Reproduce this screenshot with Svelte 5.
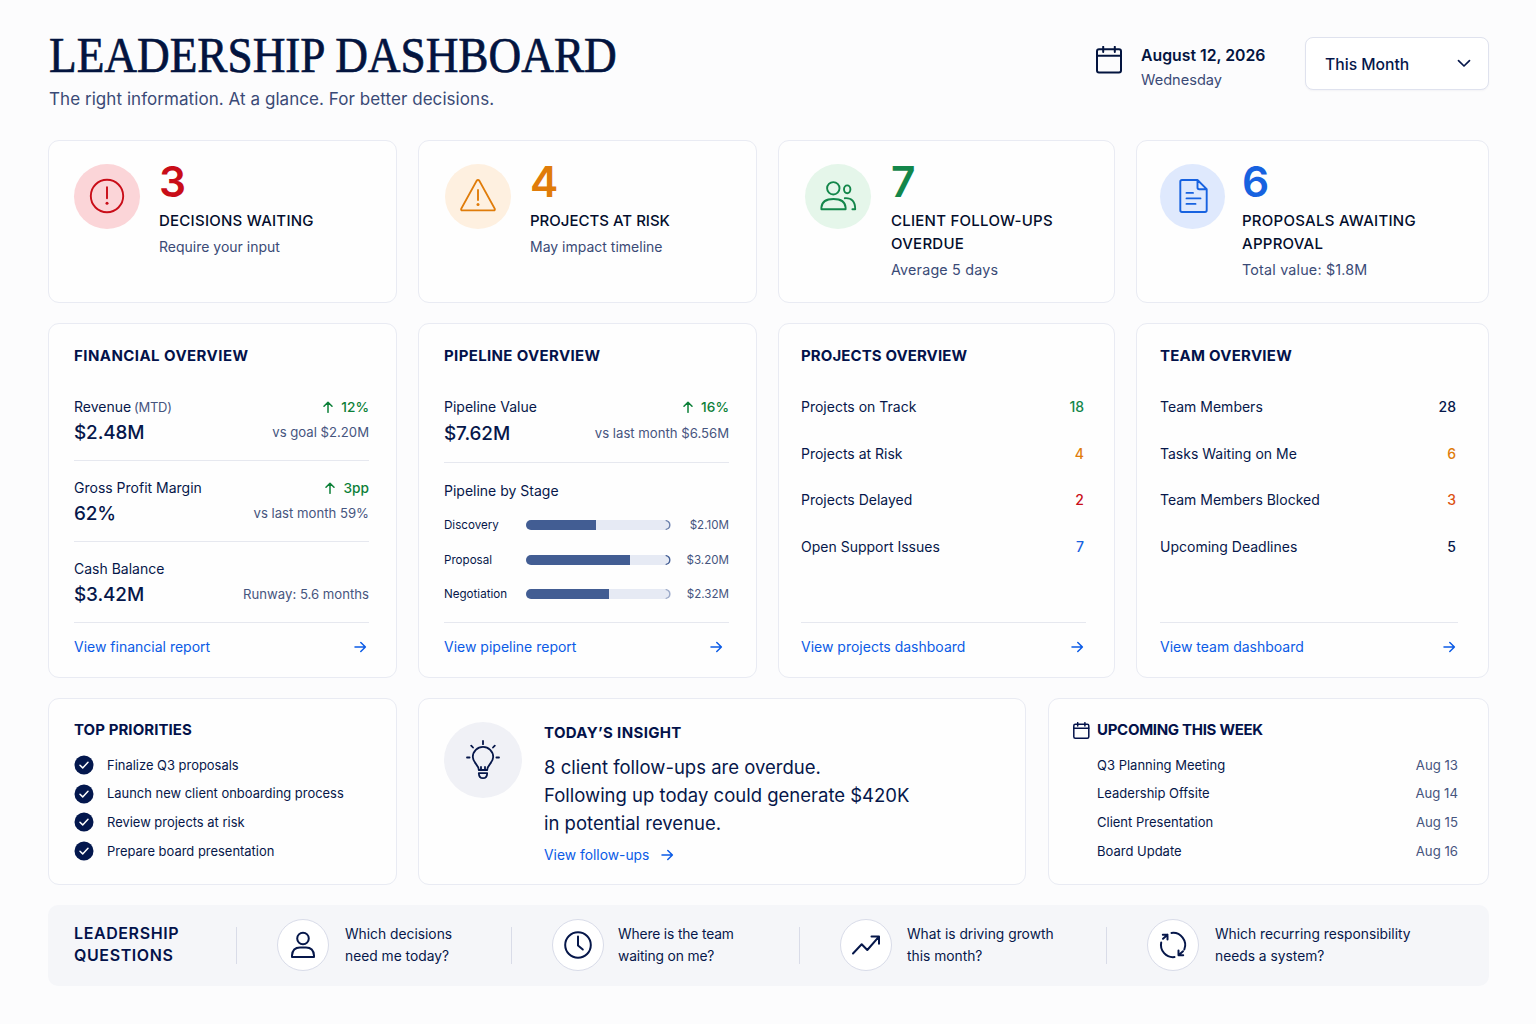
<script>
  const kpis = [
    { icon: 'alert', tone: 'red', value: '3', label: ['DECISIONS WAITING'], note: 'Require your input' },
    { icon: 'warning', tone: 'orange', value: '4', label: ['PROJECTS AT RISK'], note: 'May impact timeline' },
    { icon: 'people', tone: 'green', value: '7', label: ['CLIENT FOLLOW-UPS', 'OVERDUE'], note: 'Average 5 days' },
    { icon: 'document', tone: 'blue', value: '6', label: ['PROPOSALS AWAITING', 'APPROVAL'], note: 'Total value: $1.8M' }
  ];
  const stages = [
    { name: 'Discovery', share: 48.5, amount: '$2.10M', cap: 0.75 },
    { name: 'Proposal', share: 71.5, amount: '$3.20M', cap: 1 },
    { name: 'Negotiation', share: 57, amount: '$2.32M', cap: 0.45 }
  ];
  const projects = [
    { name: 'Projects on Track', value: '18', tone: 'green' },
    { name: 'Projects at Risk', value: '4', tone: 'orange' },
    { name: 'Projects Delayed', value: '2', tone: 'red' },
    { name: 'Open Support Issues', value: '7', tone: 'blue' }
  ];
  const team = [
    { name: 'Team Members', value: '28', tone: 'navy' },
    { name: 'Tasks Waiting on Me', value: '6', tone: 'orange' },
    { name: 'Team Members Blocked', value: '3', tone: 'rust' },
    { name: 'Upcoming Deadlines', value: '5', tone: 'navy' }
  ];
  const priorities = ['Finalize Q3 proposals', 'Launch new client onboarding process', 'Review projects at risk', 'Prepare board presentation'];
  const events = [
    ['Q3 Planning Meeting', 'Aug 13'],
    ['Leadership Offsite', 'Aug 14'],
    ['Client Presentation', 'Aug 15'],
    ['Board Update', 'Aug 16']
  ];
  const questions = [
    { icon: 'person', lines: ['Which decisions', 'need me today?'] },
    { icon: 'clock', lines: ['Where is the team', 'waiting on me?'] },
    { icon: 'trend', lines: ['What is driving growth', 'this month?'] },
    { icon: 'cycle', lines: ['Which recurring responsibility', 'needs a system?'] }
  ];
</script>

{#snippet arrow()}
  <svg class="arrow" width="13" height="12" viewBox="0 0 13 12"><path d="M1 6h10.400M6.800 1.500 11.400 6 6.800 10.500" /></svg>
{/snippet}

{#snippet rise(text)}
  <span class="rise">
    <svg width="10" height="12" viewBox="0 0 10 12"><path d="M5 11.3V1.2M1 5.2 5 1.2l4 4" /></svg>{text}
  </span>
{/snippet}

{#snippet metric(name, value, change, note, suffix = '')}
  <div class="metric">
    <div class="line"><span>{name}{#if suffix}&nbsp;<small>{suffix}</small>{/if}</span>{#if change}{@render rise(change)}{/if}</div>
    <div class="line big"><strong>{value}</strong><span class="vs">{note}</span></div>
  </div>
{/snippet}

{#snippet link(text)}
  <div class="link"><span>{text}</span>{@render arrow()}</div>
{/snippet}

{#snippet list(rows)}
  <div class="rows">
    {#each rows as r}
      <div class="row"><span>{r.name}</span><b class={r.tone}>{r.value}</b></div>
    {/each}
  </div>
{/snippet}

<div class="page">
  <header>
    <div class="heading">
      <h1>LEADERSHIP DASHBOARD</h1>
      <p>The right information. At a glance. For better decisions.</p>
    </div>
    <div class="tools">
      <svg class="cal" width="26" height="28" viewBox="0 0 26 28"><rect x="1" y="3.2" width="24" height="23.3" rx="2" /><path d="M1 9.8h24M7.2 .8v5.200M18.800 .8v5.200" /></svg>
      <div class="date"><strong>August 12, 2026</strong><span>Wednesday</span></div>
      <div class="select">
        <span>This Month</span>
        <svg width="14" height="9" viewBox="0 0 14 9"><path d="M1.500 1.700 7 7l5.500-5.300" /></svg>
      </div>
    </div>
  </header>

  <section class="grid kpis">
    {#each kpis as k}
      <article class="card kpi {k.tone}">
        <div class="disc">
          <svg width="38" height="38" viewBox="0 0 38 38">
            {#if k.icon === 'alert'}
              <circle cx="19" cy="19" r="16.200" /><path d="M19 10.200v11" /><circle class="dot" cx="19" cy="26.300" r="1.500" />
            {:else if k.icon === 'warning'}
              <path d="M17.600 3.900Q19 1.800 20.400 3.900L35.700 31.600Q36.300 33.400 34.600 33.400H3.400Q1.700 33.400 2.300 31.600Z" /><path d="M19 13v10" /><circle class="dot" cx="19" cy="27.500" r="1.500" />
            {:else if k.icon === 'people'}
              <circle cx="14.300" cy="11.300" r="6.200" />
              <path d="M2.400 32.200V30.500Q3 22 14.500 22T26.600 30.500V32.200Z" />
              <ellipse cx="28.200" cy="12.300" rx="3.200" ry="3.900" />
              <path d="M25.800 21.200Q36.200 20.500 36.200 32.200H33.400" />
            {:else}
              <path d="M23.500 3H8Q6.300 3 6.300 4.700V33.300Q6.300 35 8 35H31Q32.700 35 32.700 33.300V12.200L23.500 3V10.500Q23.500 12.200 25.200 12.200H32.700M12.500 15.900h6.500M12.500 21.400h14M12.500 26.900h9" />
            {/if}
          </svg>
        </div>
        <div class="kpi-text">
          <div class="number">{k.value}</div>
          <h3>{#each k.label as l}<span>{l}</span>{/each}</h3>
          <p>{k.note}</p>
        </div>
      </article>
    {/each}
  </section>

  <section class="grid overview">
    <article class="card financial">
      <h2>FINANCIAL OVERVIEW</h2>
      {@render metric('Revenue', '$2.48M', '12%', 'vs goal $2.20M', '(MTD)')}
      {@render metric('Gross Profit Margin', '62%', '3pp', 'vs last month 59%')}
      {@render metric('Cash Balance', '$3.42M', '', 'Runway: 5.6 months')}
      {@render link('View financial report')}
    </article>

    <article class="card pipeline">
      <h2>PIPELINE OVERVIEW</h2>
      {@render metric('Pipeline Value', '$7.62M', '16%', 'vs last month $6.56M')}
      <div class="stages">
        <h4>Pipeline by Stage</h4>
        {#each stages as s}
          <div class="stage">
            <span>{s.name}</span>
            <div class="track">
              <div class="fill" style="width:{s.share}%"></div>
              <svg width="6" height="10" viewBox="0 0 6 10" style="opacity:{s.cap}"><path d="M1.200 .6Q4.800 1.600 4.800 5T1.200 9.400" /></svg>
            </div>
            <em>{s.amount}</em>
          </div>
        {/each}
      </div>
      {@render link('View pipeline report')}
    </article>

    <article class="card projects">
      <h2>PROJECTS OVERVIEW</h2>
      {@render list(projects)}
      {@render link('View projects dashboard')}
    </article>

    <article class="card team">
      <h2>TEAM OVERVIEW</h2>
      {@render list(team)}
      {@render link('View team dashboard')}
    </article>
  </section>

  <section class="bottom">
    <article class="card priorities">
      <h2>TOP PRIORITIES</h2>
      {#each priorities as p}
        <div class="item">
          <svg width="20" height="20" viewBox="0 0 20 20"><circle cx="10" cy="10" r="9.500" /><path d="m6 10.300 2.700 2.600 5.300-5.600" /></svg>
          <span>{p}</span>
        </div>
      {/each}
    </article>

    <article class="card insight">
      <div class="bulb">
        <svg width="34" height="40" viewBox="0 0 34 40">
          <path d="M12.800 30C12.800 24.800 6.800 22.800 6.800 17a10.200 10.200 0 0 1 20.400 0C27.200 22.800 21.200 24.800 21.200 30ZM15 27v2.500M19 27v2.500M12.800 33.200H21.200Q21 38.200 17 38.200T12.800 33.200ZM17 1v3.200M5.200 5.600 7 7.500M28.800 5.600 27 7.500M1 17.500H3.600M30.400 17.500H33" />
        </svg>
      </div>
      <div class="insight-text">
        <h2>TODAY’S INSIGHT</h2>
        <p>8 client follow-ups are overdue.<br />Following up today could generate $420K<br />in potential revenue.</p>
        <div class="follow"><span>View follow-ups</span>{@render arrow()}</div>
      </div>
    </article>

    <article class="card upcoming">
      <h2>
        <svg width="17" height="17" viewBox="0 0 17 17"><rect x=".8" y="2.200" width="15" height="14" rx="1.500" /><path d="M.8 6.300h15M4.700 .7v3.300M11.900 .7v3.300" /></svg>
        <span>UPCOMING THIS WEEK</span>
      </h2>
      {#each events as [name, day]}
        <div class="event"><span>{name}</span><em>{day}</em></div>
      {/each}
    </article>
  </section>

  <footer>
    <h2>LEADERSHIP<br />QUESTIONS</h2>
    {#each questions as q}
      <div class="question {q.icon}">
        <i></i>
        <div class="ring">
          <svg width="30" height="30" viewBox="0 0 30 30">
            {#if q.icon === 'person'}
              <circle cx="15" cy="8.500" r="5.800" /><path d="M4 27V25.500Q4.500 17.500 12 17.500H18Q25.500 17.500 26 25.500V27Z" />
            {:else if q.icon === 'clock'}
              <circle cx="15" cy="15" r="12.800" /><path d="M15 6.500V15.500L19.800 19.500" />
            {:else if q.icon === 'trend'}
              <path d="M2 23.500 10.700 14.300 16.300 20 27.500 7.200M20.500 6.500H28V13.800" />
            {:else}
              <path d="M13.500 2.900A12.200 12.200 0 0 1 26.300 19.500M16.500 27.100A12.200 12.200 0 0 1 3.200 12.500" />
              <path d="M4.800 4.800H9.500V9.500M9.500 4.800 5 8.800M25.200 25.200H20.500V20.500M20.500 25.200 25 21.200" />
            {/if}
          </svg>
        </div>
        <p>{q.lines[0]}<br />{q.lines[1]}</p>
      </div>
    {/each}
  </footer>
</div>

<style>
  :global(body) { background: #fcfcfd; }
  .page {
    box-sizing: border-box; width: 1536px; height: 1024px; padding: 37px 47px 0 48px;
    font-family: Inter, "Liberation Sans", sans-serif; color: #06174a; font-size: 14px;
  }
  h1, h2, h3, h4, p { margin: 0; font-weight: 400; }
  em { font-style: normal; }
  svg { display: block; flex: none; fill: none; stroke: currentColor; stroke-width: 2; stroke-linecap: round; stroke-linejoin: round; }

  header { display: flex; justify-content: space-between; height: 103px; }
  h1 {
    font: 400 50px/50px "Liberation Serif", serif; color: #03143f; white-space: nowrap; width: 560px;
    -webkit-text-stroke: 0.7px #03143f; transform: scaleX(0.905); transform-origin: 0 0; margin: -7px 0 0 1px;
  }
  .heading p { margin: 7px 0 0 1px; font-size: 17px; letter-spacing: .06px; line-height: 24px; color: #3a4a76; white-space: nowrap; }
  .tools { display: flex; align-items: flex-start; }
  .cal { margin: 9px 19px 0 0; color: #03143f; }
  .date { width: 164px; display: flex; flex-direction: column; line-height: 24px; padding-top: 7px; }
  .date strong { font-size: 15.800px; font-weight: 600; color: #03143f; line-height: 24px; }
  .date span { font-size: 14.600px; }
  .date span { color: #3a4a76; }
  .select {
    box-sizing: border-box; width: 184px; height: 53px; border: 1px solid #dfe2ee; border-radius: 8px; background: #fff;
    display: flex; align-items: center; justify-content: space-between; padding: 0 17px 0 19px; font-size: 15.700px; font-weight: 450;
    box-shadow: 0 1px 2px rgba(20, 30, 80, .04);
  }
  .select span { margin-top: 1px; }
  .select svg { stroke-width: 1.700; }

  .grid { display: grid; grid-template-columns: 349px 339px 337px 353px; column-gap: 21px; }
  .card { box-sizing: border-box; background: #fefefe; border: 1px solid #e9ebf3; border-radius: 11px; }
  .kpis { height: 163px; margin-bottom: 20px; }
  .kpi { display: flex; padding: 19px 0 0 25px; }
  .kpi.orange, .kpi.green { padding-left: 26px; }
  .kpi.blue { padding-left: 23px; }
  .disc { width: 66px; height: 65px; margin: 4px 19px 0 0; border-radius: 50%; display: grid; place-items: center; flex: none; }
  .kpi.green .disc { margin-right: 20px; }
  .kpi.blue .disc { width: 65px; margin-right: 17px; }
  .disc svg { stroke-width: 1.900; margin-top: -1px; }
  .disc .dot { fill: currentColor; stroke: none; }
  .red .disc { background: #fbd5d8; }
  .orange .disc { background: #fef0e0; }
  .green .disc { background: #e5f6ea; }
  .blue .disc { background: #dfe9fd; }
  .red { color: #c90d18; }
  .orange { color: #e07c0a; }
  .green { color: #13864a; }
  .blue { color: #1762e0; }
  .rust { color: #dc5210; }
  .navy { color: #06174a; }
  .number { font-size: 42.500px; line-height: 44px; font-weight: 600; letter-spacing: -1px; }
  h3 { margin-top: 6px; font-size: 15px; letter-spacing: .25px; line-height: 22.500px; font-weight: 500; color: #030d2c; }
  .orange h3 { letter-spacing: 0; }
  h3 span { display: block; }
  .kpi p { margin-top: 3px; font-size: 14px; line-height: 22px; color: #3a4a76; }
  .kpi.green p, .kpi.blue p { margin-top: 4px; font-size: 14.300px; letter-spacing: .2px; }

  .overview { height: 355px; margin-bottom: 20px; }
  .overview .card { display: flex; flex-direction: column; padding: 20px 27px 0 25px; }
  h2 { font-size: 15px; line-height: 24px; font-weight: 650; color: #03124a; }
  .overview h2 { margin-bottom: 12px; letter-spacing: .1px; }
  .overview .financial h2 { letter-spacing: .44px; }
  .overview .pipeline h2 { letter-spacing: .35px; }
  .overview .team h2 { letter-spacing: .25px; }
  .metric { height: 64px; padding-top: 16px; border-bottom: 1px solid #e6e8ef; }
  .line { display: flex; justify-content: space-between; line-height: 22px; }
  small { font-size: 13px; letter-spacing: -.3px; margin-left: -1px; color: #46557e; }
  .big { line-height: 28px; }
  .big strong { font-size: 18.900px; font-weight: 550; letter-spacing: -.1px; line-height: 30px; }
  .vs { font-size: 13.150px; line-height: 29px; color: #46557e; }
  .rise { display: flex; align-items: center; gap: 8px; color: #0c8038; font-weight: 500; font-size: 13.700px; }
  .rise svg { stroke-width: 1.500; }
  .link { display: flex; align-items: center; justify-content: space-between; height: 48px; padding-right: 2px; color: #0b5be6; }
  .link span { margin-top: -2px; }
  .arrow { stroke-width: 1.500; }
  .pipeline .metric { height: 66px; }
  .pipeline .big { padding-top: 1px; }
  .pipeline .link { padding-right: 6px; }
  .stages { height: 159px; border-bottom: 1px solid #e6e8ef; }
  h4 { padding-top: 17px; line-height: 22px; margin-bottom: 6px; }
  .stage { display: flex; align-items: center; height: 34.500px; font-size: 11.600px; }
  .stage span { width: 82px; }
  .stage em { flex: 1; text-align: right; color: #46557e; }
  .track { width: 145px; height: 10px; border-radius: 5px; background: #e6eaf4; overflow: hidden; display: flex; justify-content: space-between; }
  .fill { background: #425d93; }
  .track svg { color: #425d93; stroke-width: 1.300; }
  .rows { height: 243px; padding-top: 4px; box-sizing: border-box; border-bottom: 1px solid #e6e8ef; }
  .overview .projects { padding: 20px 28px 0 22px; }
  .overview .team { padding: 20px 30px 0 23px; }
  .row { display: flex; justify-content: space-between; line-height: 46.600px; padding-right: 2px; }
  .row b { font-weight: 500; }

  .bottom { display: flex; height: 187px; margin-bottom: 20px; }
  .priorities { width: 349px; margin-right: 21px; padding: 19px 25px 0; }
  .priorities h2 { margin-bottom: 8.500px; letter-spacing: .07px; }
  .item { display: flex; align-items: center; gap: 13px; height: 28.700px; font-size: 12.950px; }
  .item span { margin-top: -.5px; }
  .item circle { fill: #03174d; stroke: none; }
  .item path { stroke: #fff; stroke-width: 1.500; }
  .insight { width: 608px; display: flex; padding: 23px 25px 0; }
  .bulb { width: 78px; height: 76px; border-radius: 50%; background: #f0f1f6; display: grid; place-items: center; margin-right: 22px; flex: none; }
  .bulb svg { stroke-width: 1.800; }
  .insight-text h2 { margin: -1px 0 9px; letter-spacing: .35px; }
  .insight-text p { font-size: 18.500px; line-height: 27.800px; white-space: nowrap; }
  .follow { display: flex; align-items: center; gap: 12px; height: 24px; margin-top: 6px; color: #0b5be6; font-size: 13.850px; }
  .upcoming { width: 441px; margin-left: auto; padding: 19px 30px 0 24px; }
  .upcoming h2 { display: flex; align-items: center; gap: 7px; margin-bottom: 8.500px; letter-spacing: -.3px; }
  .upcoming h2 svg { stroke-width: 1.500; }
  .event { display: flex; justify-content: space-between; margin-left: 24px; line-height: 28.700px; font-size: 13px; }
  .event em { color: #46557e; font-size: 13.200px; }

  footer { display: grid; grid-template-columns: 188px 275px 288px 307px 1fr; align-items: center; height: 81px; border-radius: 10px; background: #f5f6f9; }
  footer h2 { margin: -4px 0 0 26px; font-size: 16px; letter-spacing: .6px; line-height: 22px; font-weight: 600; }
  .question { display: flex; align-items: center; white-space: nowrap; }
  .question i { width: 1px; height: 37px; background: #d9dce8; margin-right: 40px; }
  .ring { box-sizing: border-box; width: 52px; height: 52px; border-radius: 50%; border: 1px solid #d9dce9; background: #fff; display: grid; place-items: center; margin: -1px 16px 0 0; }
  .trend .ring { margin-right: 15px; }
  .clock .ring { margin-right: 14px; }
  .question p { font-size: 13.800px; line-height: 22px; margin-top: -2px; }
  .clock p { letter-spacing: -.14px; }
</style>
